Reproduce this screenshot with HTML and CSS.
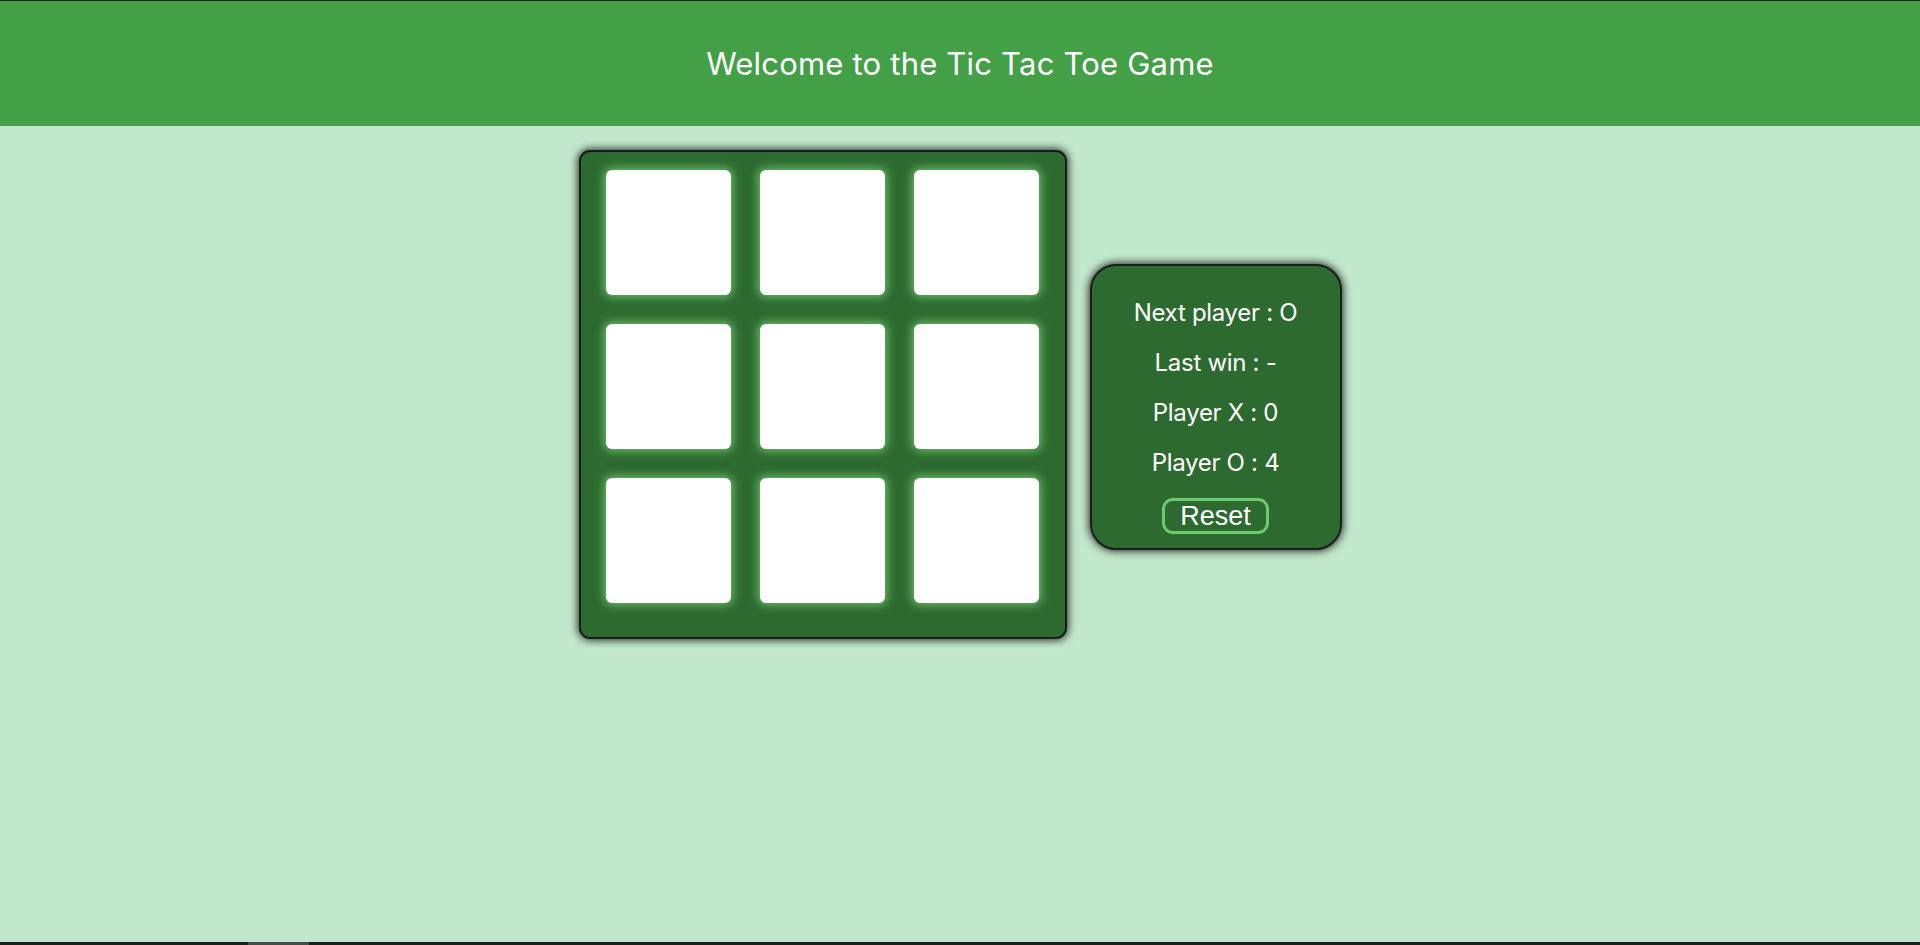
FILE: index.html
```html
<!DOCTYPE html>
<html lang="en">
<head>
<meta charset="utf-8">
<title>Tic Tac Toe</title>
<link rel="stylesheet" href="styles.css">
</head>
<body>
  <header class="top-bar">
    <h1 class="title">Welcome to the Tic Tac Toe Game</h1>
  </header>
  <main class="game">
    <div class="board">
      <div class="cell"></div>
      <div class="cell"></div>
      <div class="cell"></div>
      <div class="cell"></div>
      <div class="cell"></div>
      <div class="cell"></div>
      <div class="cell"></div>
      <div class="cell"></div>
      <div class="cell"></div>
    </div>
    <aside class="info">
      <p class="info-line">Next player : O</p>
      <p class="info-line">Last win : -</p>
      <p class="info-line">Player X : 0</p>
      <p class="info-line">Player O : 4</p>
      <button class="reset">Reset</button>
    </aside>
  </main>
  <div class="scrollbar"><div class="scroll-thumb"></div></div>
</body>
</html>
```

FILE: styles.css
```css
html, body {
  margin: 0;
  padding: 0;
}
body {
  background: #c2e8cb;
  font-family: "Inter", "Open Sans", sans-serif;
  min-height: 945px;
  border-top: 1px solid #222;
  box-sizing: border-box;
}
.top-bar {
  background: #43a047;
  height: 125px;
  display: flex;
  align-items: center;
  justify-content: center;
}
.title {
  margin: 0;
  color: #fff;
  font-weight: 400;
  font-size: 31px;
  letter-spacing: 0.2px;
}
.game {
  display: flex;
  justify-content: center;
  align-items: flex-start;
  gap: 23px;
  padding-top: 24px;
}
.board {
  background: #2d6a30;
  border: 2px solid #1c1c1c;
  border-radius: 11px;
  box-shadow: 0 0 8px 1px rgba(0,0,0,0.85);
  padding: 18px 26px 34px 25px;
  display: grid;
  grid-template-columns: repeat(3, 125px);
  grid-template-rows: repeat(3, 125px);
  gap: 29px;
}
.cell {
  background: #fff;
  border-radius: 6px;
  box-shadow: 0 0 10px 2px #6cc06c;
}
.info {
  margin-top: 114px;
  width: 248px;
  background: #2d6a30;
  border: 2px solid #1c1c1c;
  border-radius: 26px;
  box-shadow: 0 0 8px 1px rgba(0,0,0,0.85);
  padding: 22px 0 14px;
  display: flex;
  flex-direction: column;
  align-items: center;
}
.info-line {
  margin: 0;
  color: #fff;
  font-size: 24px;
  letter-spacing: -0.3px;
  line-height: 50px;
  height: 50px;
  white-space: nowrap;
}
.reset {
  box-sizing: border-box;
  margin-top: 10px;
  width: 107px;
  height: 36px;
  background: transparent;
  border: 3px solid #6ccb6f;
  border-radius: 11px;
  color: #fff;
  font-family: "Liberation Sans", Arial, sans-serif;
  font-size: 27px;
  line-height: 28px;
  padding: 0;
}
.scrollbar {
  position: fixed;
  left: 0;
  right: 0;
  bottom: 0;
  height: 3px;
  background: #1e1e1e;
}
.scroll-thumb {
  margin-left: 248px;
  width: 61px;
  height: 3px;
  background: #4a4a4a;
}
```
